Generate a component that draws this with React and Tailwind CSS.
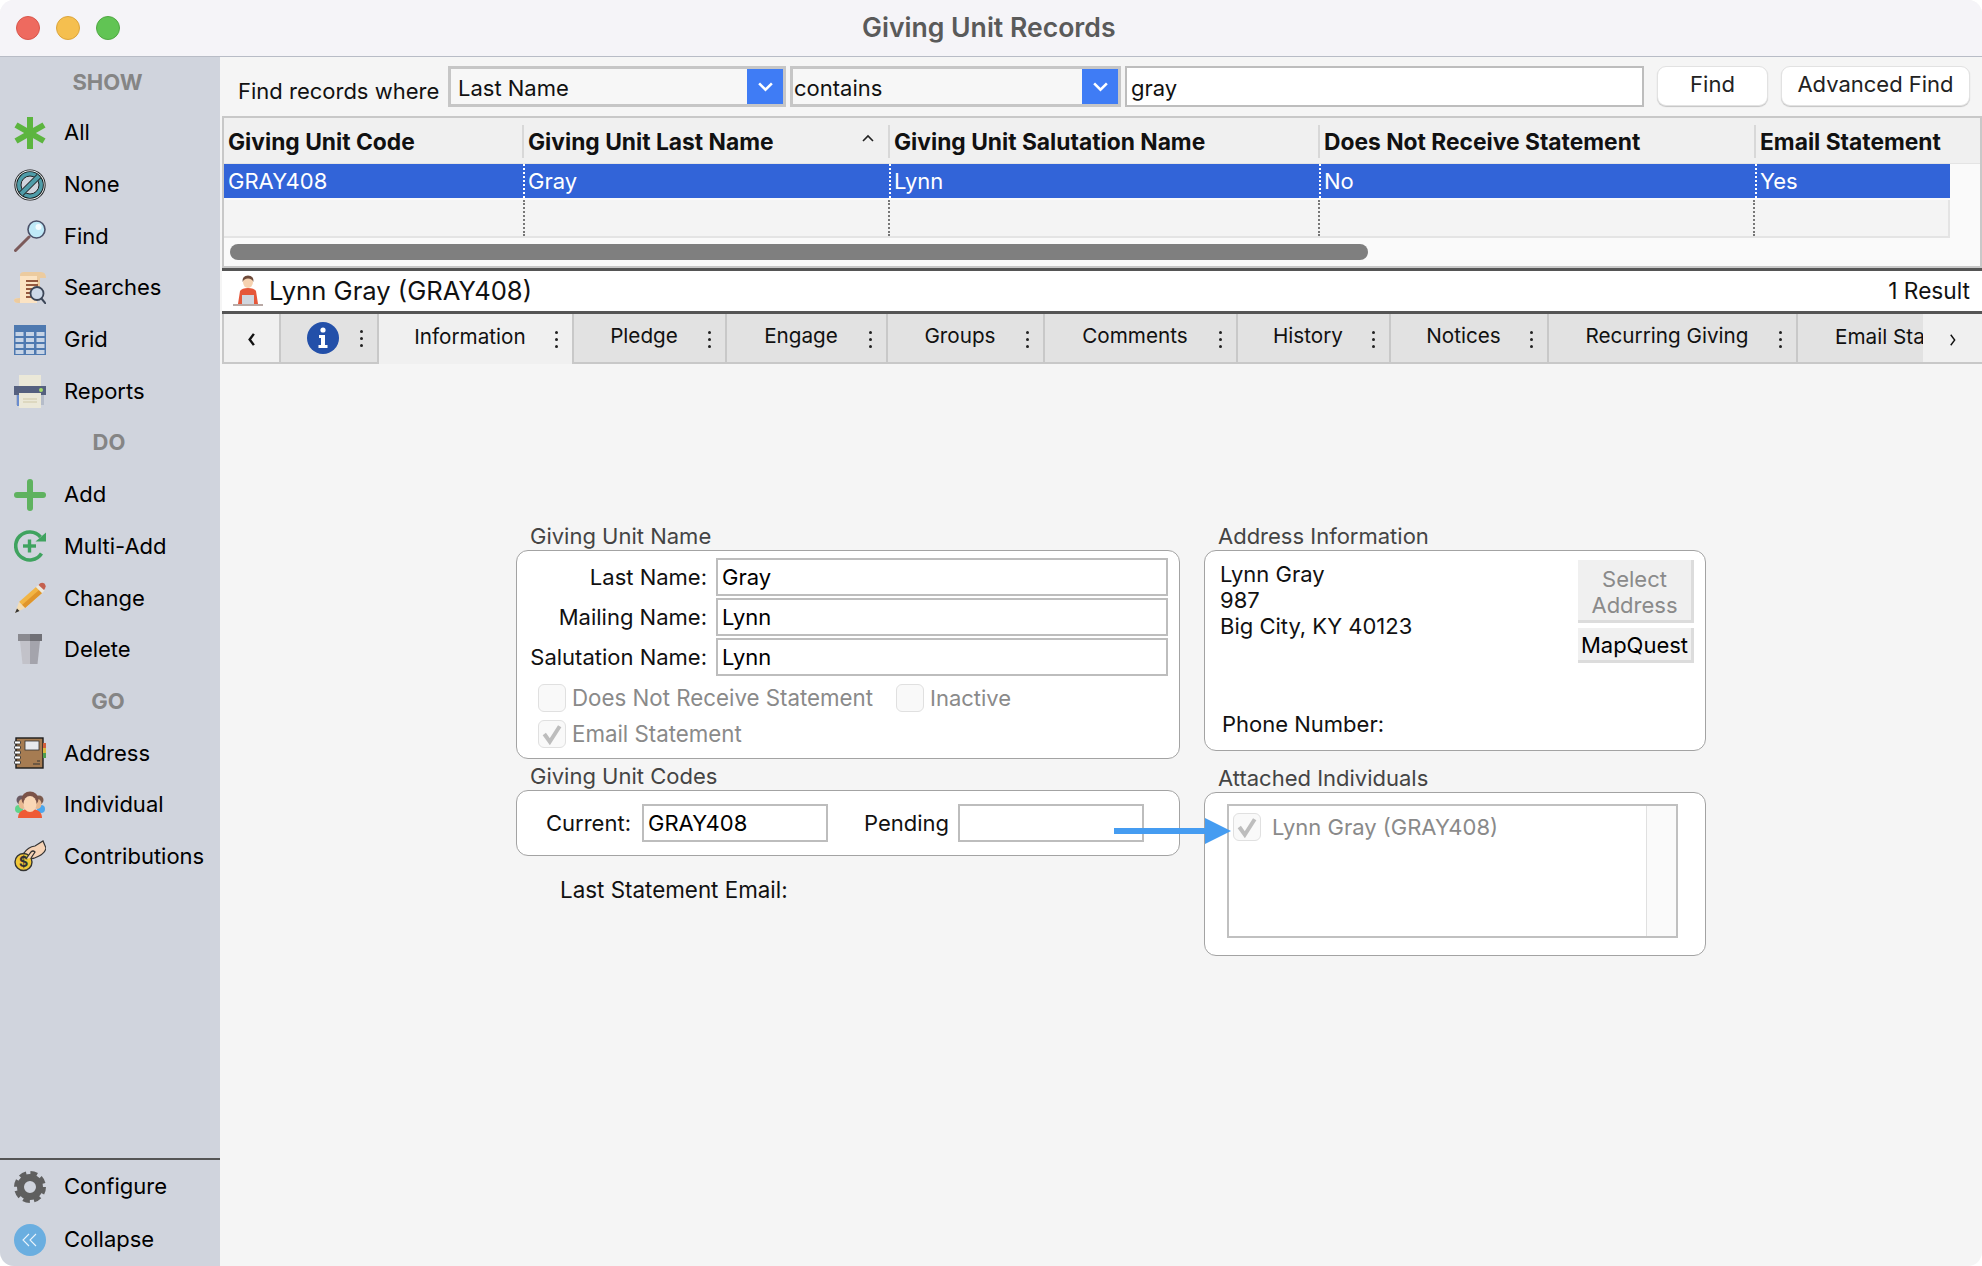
const sans = "font-['Inter','Liberation_Sans',sans-serif]";

const IconAll = () => (
  <svg viewBox="0 0 32 32" className="h-8 w-8">
    <g stroke="#5cb53f" strokeWidth="6">
      <line x1="16" y1="0" x2="16" y2="32" />
      <line x1="2" y1="8" x2="30" y2="24" />
      <line x1="2" y1="24" x2="30" y2="8" />
    </g>
  </svg>
);

const IconNone = () => (
  <svg viewBox="0 0 32 32" className="h-8 w-8">
    <circle cx="16" cy="16" r="15.6" fill="#111" />
    <circle cx="16" cy="16" r="14.7" fill="#e8f2f4" />
    <circle cx="16" cy="16" r="13.8" fill="#111" />
    <circle cx="16" cy="16" r="12.9" fill="#4f9ca8" />
    <circle cx="16" cy="16" r="9" fill="#d0d4dd" stroke="#222" strokeWidth="1" />
    <line x1="7" y1="25" x2="25" y2="7" stroke="#222" strokeWidth="6" />
    <line x1="7" y1="25" x2="25" y2="7" stroke="#4f9ca8" strokeWidth="4" />
  </svg>
);

const IconFind = () => (
  <svg viewBox="0 0 32 32" className="h-8 w-8">
    <line x1="1.5" y1="30.5" x2="15" y2="17" stroke="#7c5a5a" strokeWidth="3" strokeLinecap="round" />
    <circle cx="22.5" cy="9.5" r="8.5" fill="#bfe9f7" stroke="#4a5068" strokeWidth="1.6" />
    <circle cx="24.5" cy="7" r="3" fill="#f4fcff" />
  </svg>
);

const IconSearches = () => (
  <svg viewBox="0 0 32 32" className="h-8 w-8">
    <path d="M6 3 Q6 0 10 0 H27 Q32 0 32 6 H26 V24 H6 Z" fill="#eccb9f" />
    <path d="M6 4 H23 V31 H4 Q0 31 0 28 Q0 26 6 26 Z" fill="#fbe3c3" />
    <path d="M0 28 Q0 26 6 26 V31 H4 Q0 31 0 28 Z" fill="#eccb9f" />
    <g stroke="#8a4a2f" strokeWidth="1.8">
      <line x1="12" y1="9" x2="24" y2="9" />
      <line x1="12" y1="13" x2="24" y2="13" />
      <line x1="12" y1="17" x2="18" y2="17" />
      <line x1="12" y1="21" x2="17" y2="21" />
      <line x1="12" y1="25" x2="18" y2="25" />
    </g>
    <line x1="27" y1="26" x2="32" y2="32" stroke="#3c4657" strokeWidth="2" />
    <circle cx="23" cy="21.5" r="6.5" fill="#cdd9e8" stroke="#3c4657" strokeWidth="1.8" />
  </svg>
);

const IconGrid = () => (
  <svg viewBox="0 0 32 30" className="h-[30px] w-8">
    <rect width="32" height="30" fill="#4e79b0" />
    {[7, 13, 19, 25].map((y) =>
      [1.5, 12, 22.5].map((x) => <rect key={`${x}-${y}`} x={x} y={y} width="8" height="4" fill="#c7d4e5" />)
    )}
  </svg>
);

const IconPrinter = () => (
  <svg viewBox="0 0 32 33" className="h-[33px] w-8">
    <rect x="5" y="0" width="22" height="12" fill="#ebe8d8" />
    <rect x="2" y="20" width="28" height="10" fill="#b5bcc9" />
    <rect x="3" y="20" width="3" height="11" fill="#6a8ccf" />
    <rect x="0" y="11" width="32" height="9" fill="#55607f" />
    <circle cx="27" cy="15" r="2" fill="#a6dc6a" />
    <rect x="5" y="18" width="22" height="15" fill="#ebe8d8" />
    <line x1="9" y1="24" x2="23" y2="24" stroke="#cfc8a8" />
    <line x1="9" y1="27" x2="23" y2="27" stroke="#cfc8a8" />
  </svg>
);

const IconAdd = () => (
  <svg viewBox="0 0 32 32" className="h-8 w-8">
    <g stroke="#5fb25f" strokeWidth="6" strokeLinecap="round">
      <line x1="3" y1="16" x2="29" y2="16" />
      <line x1="16" y1="3" x2="16" y2="29" />
    </g>
  </svg>
);

const IconMultiAdd = () => (
  <svg viewBox="0 0 32 32" className="h-8 w-8">
    <path d="M27.5 23.5 A14 14 0 1 1 26.5 7" fill="none" stroke="#3fa35f" strokeWidth="3.6" />
    <path d="M21.5 11.5 H32 V2.5 Z" fill="#3fa35f" />
    <g stroke="#3fa35f" strokeWidth="3.4">
      <line x1="9" y1="16" x2="22" y2="16" />
      <line x1="15.5" y1="9.5" x2="15.5" y2="22.5" />
    </g>
  </svg>
);

const IconPencil = () => (
  <svg viewBox="0 0 32 32" className="h-8 w-8">
    <path d="M5 20 L22 5 L28 11 L11 26 Z" fill="#f2b544" />
    <path d="M8 23 L25 8 L28 11 L11 26 Z" fill="#e0952a" />
    <path d="M22 5 L25 2.5 L30.5 8.5 L28 11 Z" fill="#ece8de" />
    <path d="M24.5 3 Q27 -0.5 30.5 1.5 Q33 4.5 30 8 Z" fill="#c4604e" />
    <path d="M5 20 L11 26 L1 31 Z" fill="#f3dcb2" />
    <path d="M3 26.5 L5.5 29 L1 31 Z" fill="#333" />
  </svg>
);

const IconDelete = () => (
  <svg viewBox="0 0 32 32" className="h-8 w-8">
    <path d="M6 7 H16 V30 H8.5 Z" fill="#c2c2c9" />
    <path d="M16 7 H26 L23.5 30 H16 Z" fill="#a4a4ac" />
    <rect x="4" y="0" width="12" height="7" fill="#8a8a90" />
    <rect x="16" y="0" width="12" height="7" fill="#707076" />
  </svg>
);

const IconAddress = () => (
  <svg viewBox="0 0 32 32" className="h-8 w-8">
    <rect x="2" y="1" width="27" height="30" fill="#a67c52" stroke="#1c1c1c" strokeWidth="1.4" />
    <rect x="11" y="4" width="14" height="9" fill="#e8eaee" stroke="#333" strokeWidth="0.8" />
    <rect x="29" y="6" width="3" height="5" fill="#d15f3c" />
    <rect x="29" y="11" width="3" height="5" fill="#d9b93f" />
    <rect x="29" y="16" width="3" height="5" fill="#4f9f4f" />
    <line x1="23" y1="24" x2="26" y2="24" stroke="#333" />
    <line x1="19" y1="27" x2="26" y2="27" stroke="#333" />
    {[4, 9, 14, 19, 24].map((y) => (
      <rect key={y} x="0.5" y={y} width="6" height="3" rx="1" fill="#fff" stroke="#222" strokeWidth="0.8" />
    ))}
  </svg>
);

const IconIndividual = () => (
  <svg viewBox="0 0 32 28" className="h-7 w-8">
    <circle cx="5" cy="18" r="4" fill="#5fd48a" />
    <circle cx="27" cy="18" r="4" fill="#4aa6ee" />
    <circle cx="7" cy="9" r="4.5" fill="#6b5a62" />
    <circle cx="25" cy="9" r="4.5" fill="#7b5a4c" />
    <ellipse cx="8.5" cy="13" rx="4" ry="5" fill="#e8b890" />
    <ellipse cx="23.5" cy="13" rx="4" ry="5" fill="#e8b890" />
    <path d="M4 27 Q4 18 16 18 Q28 18 28 27 Z" fill="#ef5b35" />
    <ellipse cx="16" cy="8" rx="8.5" ry="7.5" fill="#7b5247" />
    <ellipse cx="16" cy="13" rx="6.5" ry="8" fill="#fad7b6" />
  </svg>
);

const IconContributions = () => (
  <svg viewBox="0 0 32 32" className="h-8 w-8">
    <path d="M10 13 Q14 7 21 6 L29 1 L32 8 Q31 13 25 16 Q18 20 13 18 Z" fill="#f6d3b5" stroke="#333" strokeWidth="1.2" />
    <circle cx="9.5" cy="22" r="8.5" fill="#f0c838" stroke="#333" strokeWidth="1.4" />
    <text x="9.5" y="27" textAnchor="middle" fontSize="14" fontWeight="700" fill="#333" fontFamily="Inter">$</text>
    <path d="M12 19 L17 12 Q19 10 21 12 L17 18" stroke="#333" strokeWidth="1.2" fill="#f6d3b5" />
  </svg>
);

const IconGear = () => (
  <svg viewBox="0 0 32 32" className="h-8 w-8">
    <circle cx="16" cy="16" r="9.5" fill="none" stroke="#5f5f5f" strokeWidth="7" />
    <circle cx="16" cy="16" r="13.5" fill="none" stroke="#5f5f5f" strokeWidth="5" strokeDasharray="6.6 4" />
  </svg>
);

const IconCollapse = () => (
  <svg viewBox="0 0 32 32" className="h-8 w-8">
    <ellipse cx="16" cy="16" rx="16" ry="16" fill="#6aaee0" />
    <path d="M15 10 L9 16 L15 22 M22 10 L16 16 L22 22" fill="none" stroke="#e8f3fb" strokeWidth="1.1" />
  </svg>
);

const IconPerson = () => (
  <svg viewBox="0 0 32 32" className="h-8 w-8">
    <path d="M6 29 L8 16 Q10 13 16 13 Q22 13 24 16 L26 29 Z" fill="#e5573a" />
    <ellipse cx="16" cy="7" rx="5" ry="6" fill="#f6d2b0" />
    <path d="M10.5 7 Q10 0.5 16 0.5 Q22 0.5 21.5 7 Q20 3.5 16 3.5 Q12 3.5 10.5 7 Z" fill="#6e4a3a" />
    <rect x="10" y="20" width="12" height="9" fill="#cfd6df" />
    <rect x="1" y="29" width="30" height="2" fill="#b9a9a5" />
  </svg>
);

const showItems = [
  ["All", IconAll],
  ["None", IconNone],
  ["Find", IconFind],
  ["Searches", IconSearches],
  ["Grid", IconGrid],
  ["Reports", IconPrinter],
];
const doItems = [
  ["Add", IconAdd],
  ["Multi-Add", IconMultiAdd],
  ["Change", IconPencil],
  ["Delete", IconDelete],
];
const goItems = [
  ["Address", IconAddress],
  ["Individual", IconIndividual],
  ["Contributions", IconContributions],
];

const SideItem = ({ label, Icon }) => (
  <div className="flex h-[51.7px] items-center pl-[14px]">
    <div className="flex w-8 items-center justify-center">
      <Icon />
    </div>
    <span className="ml-[18px] text-[22px] text-black">{label}</span>
  </div>
);

const SideHeading = ({ children, className }) => (
  <div className={`flex items-center justify-center text-[22px] font-bold text-[#858585] ${className}`}>{children}</div>
);

const Sidebar = () => (
  <aside className="flex w-[220px] shrink-0 flex-col bg-[#d0d4dd]">
    <SideHeading className="h-[50px] pr-[5px]">SHOW</SideHeading>
    {showItems.map(([label, Icon]) => <SideItem key={label} label={label} Icon={Icon} />)}
    <SideHeading className="h-[51.7px] pr-[2px]">DO</SideHeading>
    {doItems.map(([label, Icon]) => <SideItem key={label} label={label} Icon={Icon} />)}
    <SideHeading className="h-[51.7px] pr-[4px]">GO</SideHeading>
    {goItems.map(([label, Icon]) => <SideItem key={label} label={label} Icon={Icon} />)}
    <div className="mt-auto h-[108px] border-t-2 border-[#555]">
      <div className="flex h-[53px] items-center pl-[14px]">
        <IconGear />
        <span className="ml-[18px] text-[22px] text-black">Configure</span>
      </div>
      <div className="flex h-[53px] items-center pl-[14px]">
        <IconCollapse />
        <span className="ml-[18px] text-[22px] text-black">Collapse</span>
      </div>
    </div>
  </aside>
);

const Select = ({ value, className, textClass }) => (
  <div className={`flex h-[41px] items-center border-[3px] border-[#c6c6c6] bg-[#f7f7f7] ${className}`}>
    <span className={`flex-1 pt-[3px] text-[22px] text-[#111] ${textClass}`}>{value}</span>
    <div className="flex h-[35px] w-[36px] items-center justify-center bg-[#3f7cf5]">
      <svg viewBox="0 0 16 10" className="h-[11px] w-[17px]">
        <path d="M2 2 L8 8 L14 2" fill="none" stroke="#fff" strokeWidth="2.4" />
      </svg>
    </div>
  </div>
);

const PillButton = ({ children, className }) => (
  <button className={`h-[40px] rounded-[9px] border border-[#e2e2e2] bg-white pb-[3px] text-[22px] text-[#222] shadow-[0_1px_1px_rgba(0,0,0,0.2)] ${className}`}>
    {children}
  </button>
);

const columns = [
  ["Giving Unit Code", "GRAY408", "w-[299px]"],
  ["Giving Unit Last Name", "Gray", "w-[366px]"],
  ["Giving Unit Salutation Name", "Lynn", "w-[430px]"],
  ["Does Not Receive Statement", "No", "w-[436px]"],
  ["Email Statement", "Yes", "w-[195px]"],
];

const RecordTable = () => (
  <div className="ml-[2px] flex h-[152px] flex-col border-[2px] border-b-[2px] border-[#c8c8c8] bg-[#fafafa]">
    <div className="flex h-[46px] shrink-0 border-b border-[#e4e4e4] bg-[#f0f0f0]">
      {columns.map(([title, , width], i) => (
        <div key={title} className={`relative flex items-center pt-[4px] ${width} ${i > 0 ? "pl-[5px]" : "pl-[4px]"}`}>
          {i > 0 && <div className="absolute left-[-1px] top-[7px] h-[33px] w-[2px] bg-[#d8d8d8]" />}
          <span className="text-[22.8px] font-bold whitespace-nowrap text-[#111]">{title}</span>
          {i === 1 && (
            <svg viewBox="0 0 14 9" className="absolute right-[14px] top-[16px] h-[9px] w-[14px]">
              <path d="M2 7 L7 2 L12 7" fill="none" stroke="#222" strokeWidth="1.6" />
            </svg>
          )}
        </div>
      ))}
    </div>
    <div className="flex h-[34px] w-[1726px] shrink-0 bg-[#3264d8]">
      {columns.map(([title, value, width], i) => (
        <div key={title} className={`flex items-center pt-[1px] text-[22px] text-white ${width} ${i > 0 ? "border-l-2 border-dotted border-white pl-[3px]" : "pl-[4px]"}`}>
          {value}
        </div>
      ))}
    </div>
    <div className="mt-[2px] flex h-[38px] w-[1726px] shrink-0 border-r-2 border-b-2 border-[#e4e4e4] bg-[#f4f4f4]">
      {columns.map(([title, , width], i) => (
        <div key={title} className={`${width} ${i > 0 ? "border-l-2 border-dotted border-[#777]" : ""}`} />
      ))}
    </div>
    <div className="flex-1 pl-[6px] pt-[6px]">
      <div className="h-4 w-[1138px] rounded-full bg-[#7f7f7f]" />
    </div>
  </div>
);

const Dots = ({ className }) => (
  <div className={`flex flex-col gap-[4px] ${className}`}>
    <span className="h-[3px] w-[3px] rounded-full bg-[#222]" />
    <span className="h-[3px] w-[3px] rounded-full bg-[#222]" />
    <span className="h-[3px] w-[3px] rounded-full bg-[#222]" />
  </div>
);

const tabs = [
  ["Information", "w-[195px]", true],
  ["Pledge", "w-[153px]"],
  ["Engage", "w-[161px]"],
  ["Groups", "w-[157px]"],
  ["Comments", "w-[193px]"],
  ["History", "w-[153px]"],
  ["Notices", "w-[158px]"],
  ["Recurring Giving", "w-[249px]"],
];

const TabBar = () => (
  <div className="ml-[2px] flex h-[50px] shrink-0 text-[20.7px] text-[#111]">
    <div className="flex w-[59px] items-center justify-center border-r-2 border-b-2 border-l-2 border-[#c8c8c8] bg-[#f0f0f0]">
      <svg viewBox="0 0 10 16" className="mt-[2px] h-[15px] w-[10px]">
        <path d="M7 2 L2.5 8 L7 14" fill="none" stroke="#111" strokeWidth="2.6" />
      </svg>
    </div>
    <div className="flex w-[98px] items-center border-r-2 border-b-2 border-[#c8c8c8] bg-[#e2e2e2] pl-[26px]">
      <div className="flex h-8 w-8 items-center justify-center rounded-full bg-[#2350a9]">
        <svg viewBox="0 0 12 22" className="h-[22px] w-3">
          <circle cx="6" cy="3" r="2.6" fill="#fff" />
          <path d="M2 8 H8 V18 H10.5 V21 H1.5 V18 H4 V11 H2 Z" fill="#fff" />
        </svg>
      </div>
      <Dots className="ml-[21px]" />
    </div>
    {tabs.map(([label, width, active]) => (
      <div key={label} className={`relative flex items-center justify-center pb-[4px] pr-[11px] ${width} ${active ? "border-r-2 border-[#c8c8c8] bg-[#f0f0f0]" : "border-r-2 border-b-2 border-[#c8c8c8] bg-[#e2e2e2]"}`}>
        {label}
        <Dots className="absolute right-[14px] top-[17px]" />
      </div>
    ))}
    <div className="w-[125px] overflow-hidden border-b-2 border-[#c8c8c8] bg-[#e2e2e2] pl-[37px] pt-[7px] whitespace-nowrap">Email Statement</div>
    <div className="flex flex-1 items-center justify-center border-b-2 border-[#c8c8c8] bg-[#f0f0f0]">
      <svg viewBox="0 0 10 16" className="mt-[4px] h-[14px] w-[9px]">
        <path d="M3 2 L7.5 8 L3 14" fill="none" stroke="#111" strokeWidth="1.6" />
      </svg>
    </div>
  </div>
);

const Field = ({ value, className }) => (
  <div className={`flex h-[38px] items-center border-2 border-[#bdbdbd] bg-white pl-[4px] text-[22px] text-black ${className}`}>{value}</div>
);

const NameRow = ({ label, value }) => (
  <div className="flex items-center">
    <span className="w-[190px] text-right text-[22px] whitespace-nowrap text-[#111]">{label}</span>
    <Field value={value} className="ml-[9px] w-[452px]" />
  </div>
);

const Check = ({ checked }) => (
  <div className="flex h-[28px] w-[28px] shrink-0 items-center justify-center rounded-[6px] border border-[#e0e0e0] bg-[#f9f9f9]">
    {checked && (
      <svg viewBox="0 0 20 20" className="h-[22px] w-[22px]">
        <path d="M3 10 L8 17 L17 3" fill="none" stroke="#bdbdbd" strokeWidth="3.6" />
      </svg>
    )}
  </div>
);

const Panel = ({ className, children }) => (
  <div className={`rounded-[12px] border border-[#a3a3a3] bg-white ${className}`}>{children}</div>
);

const GroupLabel = ({ children, className }) => (
  <div className={`h-[26px] pl-[14px] text-[22px] text-[#444] ${className}`}>{children}</div>
);

const LeftColumn = () => (
  <div className="w-[664px] shrink-0">
    <GroupLabel className="leading-[24px]">Giving Unit Name</GroupLabel>
    <Panel className="h-[209px] pt-[7px]">
      <div className="flex flex-col gap-[2px]">
        <NameRow label="Last Name:" value="Gray" />
        <NameRow label="Mailing Name:" value="Lynn" />
        <NameRow label="Salutation Name:" value="Lynn" />
      </div>
      <div className="mt-[8px] flex h-[28px] items-center pl-[21px] text-[22.3px] text-[#8a8a8a]">
        <Check />
        <span className="ml-[6px] w-[324px]">Does Not Receive Statement</span>
        <Check />
        <span className="ml-[6px] text-[22px]">Inactive</span>
      </div>
      <div className="mt-[8px] flex h-[28px] items-center pl-[21px] text-[22.3px] text-[#8a8a8a]">
        <Check checked />
        <span className="ml-[6px]">Email Statement</span>
      </div>
    </Panel>
    <GroupLabel className="mt-[5px] leading-[24px]">Giving Unit Codes</GroupLabel>
    <Panel className="flex h-[66px] items-center pl-[29px] text-[22px] text-[#111]">
      <span className="w-[96px]">Current:</span>
      <Field value="GRAY408" className="w-[186px]" />
      <span className="ml-[36px] w-[94px]">Pending</span>
      <Field className="w-[186px]" />
    </Panel>
    <div className="mt-[21px] pl-[44px] text-[22.4px] leading-[26px] text-[#111]">Last Statement Email:</div>
  </div>
);

const SquareButton = ({ className, children }) => (
  <div className={`flex w-[116px] items-center justify-center border-r-[3px] border-b-[3px] border-[#dcdcdc] bg-[#f0f0f0] text-center text-[22px] leading-[26px] ${className}`}>
    {children}
  </div>
);

const RightColumn = () => (
  <div className="ml-[24px] w-[502px] shrink-0">
    <GroupLabel className="leading-[24px]">Address Information</GroupLabel>
    <Panel className="flex h-[201px] justify-between">
      <div className="flex flex-col pb-[13px] pl-[15px] pt-[10px] text-[22px] leading-[26px] text-[#111]">
        <div>Lynn Gray</div>
        <div>987</div>
        <div>Big City, KY 40123</div>
        <div className="mt-auto pl-[2px]">Phone Number:</div>
      </div>
      <div className="mr-[11px] flex flex-col gap-[5px] pt-[9px]">
        <SquareButton className="h-[63px] pt-[3px] text-[#8a8a8a]">Select<br />Address</SquareButton>
        <SquareButton className="h-[35px] pt-[1px] whitespace-nowrap text-black">MapQuest</SquareButton>
      </div>
    </Panel>
    <GroupLabel className="mt-[14px] mb-[1px] leading-[26px]">Attached Individuals</GroupLabel>
    <Panel className="h-[164px] pl-[22px] pt-[11px]">
      <div className="flex h-[134px] w-[451px] border-2 border-[#c0c0c0]">
        <div className="flex flex-1 items-start pl-[4px] pt-[7px]">
          <Check checked />
          <span className="ml-[11px] text-[22px] leading-[28px] text-[#8a8a8a]">Lynn Gray (GRAY408)</span>
        </div>
        <div className="w-[30px] border-l border-[#e0e0e0] bg-[#fafafa]" />
      </div>
    </Panel>
  </div>
);

export default function App() {
  return (
    <div className={`relative flex h-[1266px] w-[1982px] flex-col overflow-hidden rounded-[14px] bg-[#f5f5f5] ${sans}`}>
      <header className="flex h-[57px] shrink-0 items-center border-b border-[#b8bcc6] bg-[#f5f4f8] pl-[16px]">
        <div className="flex gap-4">
          <span className="h-6 w-6 rounded-full border border-[#d9564c] bg-[#ee6a5f]" />
          <span className="h-6 w-6 rounded-full border border-[#dca53c] bg-[#f5bf4f]" />
          <span className="h-6 w-6 rounded-full border border-[#50a843] bg-[#61c454]" />
        </div>
        <h1 className="ml-[742px] text-[26.6px] font-semibold text-[#5a5a5a]">Giving Unit Records</h1>
      </header>
      <div className="flex min-h-0 flex-1">
        <Sidebar />
        <main className="flex min-w-0 flex-1 flex-col">
          <div className="flex h-[59px] shrink-0 items-start pt-[9px]">
            <span className="w-[228px] pl-[18px] pt-[9px] text-[22px] text-[#111]">Find records where</span>
            <Select value="Last Name" className="w-[338px]" textClass="pl-[7px]" />
            <Select value="contains" className="ml-[4px] w-[331px]" textClass="pl-[1px]" />
            <div className="ml-[4px] flex h-[41px] w-[519px] items-center border-2 border-[#bdbdbd] bg-white pl-[4px] pt-[3px] text-[22px] text-[#111]">gray</div>
            <PillButton className="ml-[13px] w-[111px]">Find</PillButton>
            <PillButton className="ml-[13px] w-[189px]">Advanced Find</PillButton>
          </div>
          <RecordTable />
          <div className="ml-[2px] flex h-[46px] shrink-0 items-center justify-between border-t-[3px] border-b-[3px] border-[#555] bg-white pl-[10px] pr-[12px]">
            <div className="flex items-center">
              <IconPerson />
              <span className="ml-[5px] text-[25.6px] text-[#111]">Lynn Gray (GRAY408)</span>
            </div>
            <span className="text-[22.7px] text-[#111]">1 Result</span>
          </div>
          <TabBar />
          <div className="flex flex-1 pl-[296px] pt-[160px]">
            <LeftColumn />
            <RightColumn />
          </div>
        </main>
      </div>
      {/* annotation arrow, over the form */}
      <svg viewBox="0 0 117 26" className="absolute left-[1114px] top-[818px] h-[26px] w-[117px]">
        <rect x="0" y="10" width="92" height="6" fill="#459cf1" />
        <path d="M91 0 L117 13 L91 26 Z" fill="#459cf1" />
      </svg>
    </div>
  );
}
